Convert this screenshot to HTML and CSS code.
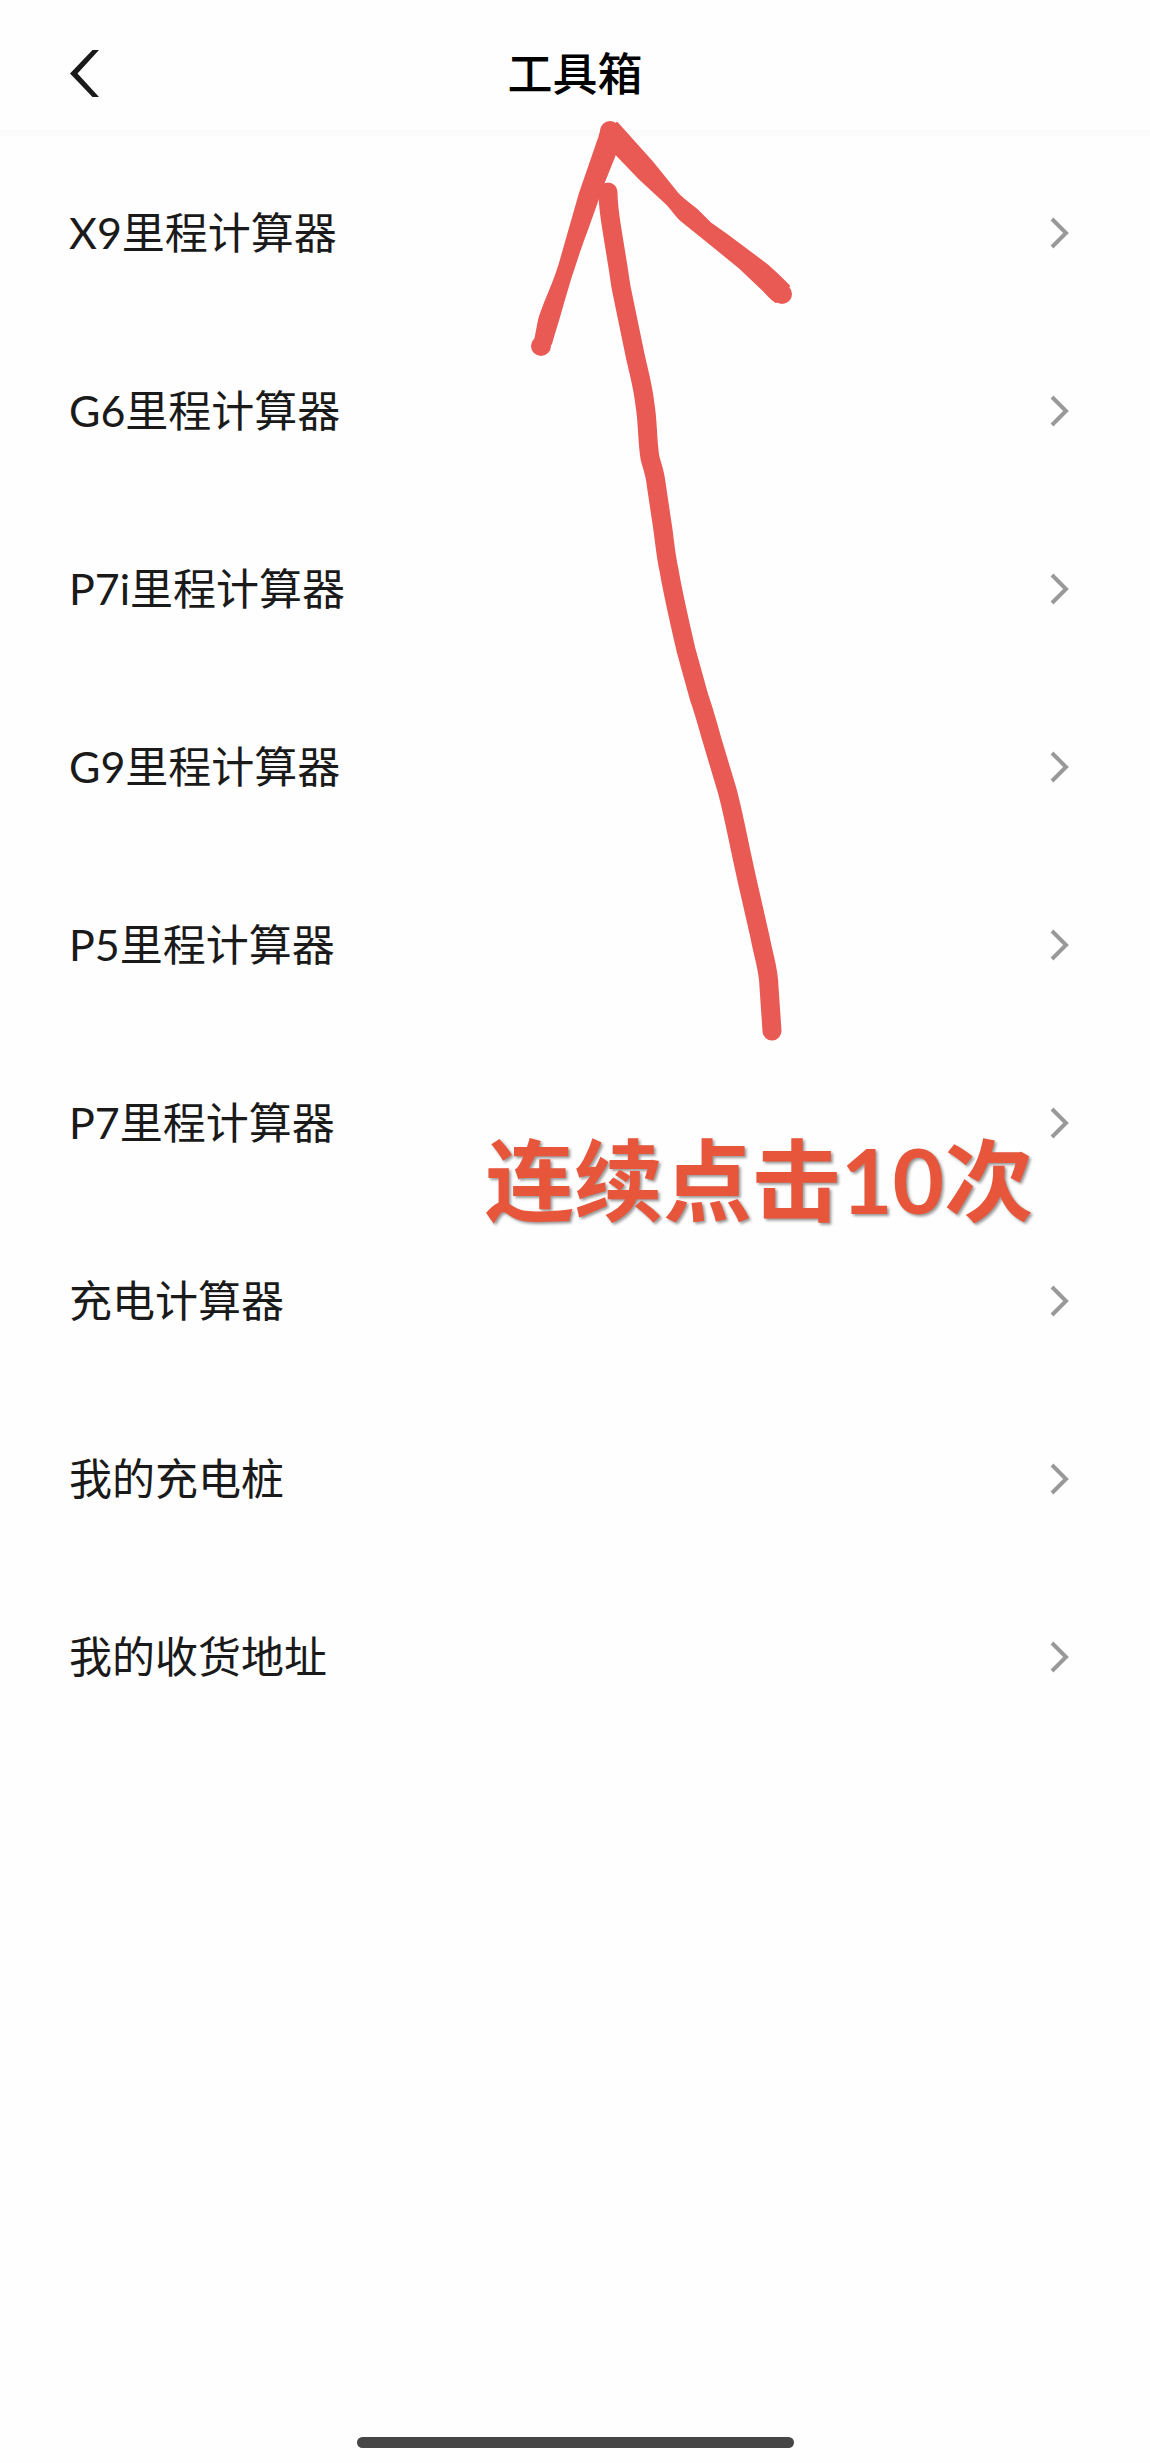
FILE: index.html
```html
<!DOCTYPE html>
<html lang="zh-CN">
  <head>
    <meta charset="UTF-8" />
    <meta name="viewport" content="width=device-width, initial-scale=1.0" />
    <title>工具箱</title>
    <link rel="stylesheet" href="styles.css">
  </head>
  <body>
    <header class="header">
      <button class="back-btn" type="button" aria-label="返回">
        <svg width="30" height="48" viewBox="0 0 30 48"><path d="M22.5 0H29L7.5 23.5 29 47H22.5L0 23.5Z" fill="#1a1a1a" /></svg>
      </button>
      <h1>工具箱</h1>
    </header>

    <nav class="tool-list">
      <a href="#" class="tool"><span>X9里程计算器</span><svg class="arrow" viewBox="0 0 20 32"><path d="M2 2L16 16 2 30" /></svg></a>
      <a href="#" class="tool"><span>G6里程计算器</span><svg class="arrow" viewBox="0 0 20 32"><path d="M2 2L16 16 2 30" /></svg></a>
      <a href="#" class="tool"><span>P7i里程计算器</span><svg class="arrow" viewBox="0 0 20 32"><path d="M2 2L16 16 2 30" /></svg></a>
      <a href="#" class="tool"><span>G9里程计算器</span><svg class="arrow" viewBox="0 0 20 32"><path d="M2 2L16 16 2 30" /></svg></a>
      <a href="#" class="tool"><span>P5里程计算器</span><svg class="arrow" viewBox="0 0 20 32"><path d="M2 2L16 16 2 30" /></svg></a>
      <a href="#" class="tool"><span>P7里程计算器</span><svg class="arrow" viewBox="0 0 20 32"><path d="M2 2L16 16 2 30" /></svg></a>
      <a href="#" class="tool"><span>充电计算器</span><svg class="arrow" viewBox="0 0 20 32"><path d="M2 2L16 16 2 30" /></svg></a>
      <a href="#" class="tool"><span>我的充电桩</span><svg class="arrow" viewBox="0 0 20 32"><path d="M2 2L16 16 2 30" /></svg></a>
      <a href="#" class="tool"><span>我的收货地址</span><svg class="arrow" viewBox="0 0 20 32"><path d="M2 2L16 16 2 30" /></svg></a>
    </nav>

    <div class="home-bar"></div>

    <!-- hand drawn arrow pointing at the title -->
    <svg class="mark-arrow" width="270" height="930" viewBox="525 115 270 930" aria-hidden="true">
      <path class="head" d="M602 128L599 138 580 193 560 263C553 287 544 302 539 320L535 341 551 344C554 333 559 318 563 303 570 278 579 251 588 227L604 182 616 152 618 128Z" />
      <path class="head" d="M617 123L652 162 677 193C683 200 690 204 697 210L710 223 727 235 767 265 778 275 789 286 776 302C770 299 766 292 760 287L740 268 713 246 682 221C677 217 672 209 667 204L640 179 615 153 603 137Z" />
      <circle cx="610" cy="131" r="10" />
      <circle cx="541" cy="346" r="10" />
      <circle cx="782" cy="294" r="10" />
      <path class="shaft" d="M608 192C608 205 610 218 612 230L618 267 621 287 634 350C638 370 643 385 645 405 648 422 647 440 650 458 652 466 655 473 656 483L663 530C665 545 666 557 669 570 673 594 680 624 686 650L699 697C704 711 708 726 712 740L727 790C733 812 737 834 742 857L747 880 760 937C763 954 769 970 769 987L772 1031" />
    </svg>
    <p class="mark-text">连续点击10次</p>
  </body>
</html>
```
FILE: styles.css
```css
* {
  margin: 0;
  padding: 0;
  box-sizing: border-box;
}

body {
  position: relative;
  display: flex;
  flex-direction: column;
  min-height: 100vh;
  padding-bottom: 15px;
  background-color: #fefefe;
  color: #1a1a1a;
  font-family: Lato, "Noto Sans CJK SC", sans-serif;
}

.header {
  display: grid;
  grid-template-columns: 1fr auto 1fr;
  align-items: center;
  height: 136px;
  padding: 18px 70px 0;
  border-bottom: 6px solid #fafafa;
}

.back-btn {
  justify-self: start;
  height: 48px;
  border: none;
  background: none;
  cursor: pointer;
}

.back-btn svg {
  display: block;
}

h1 {
  color: #000;
  font-size: 45px;
  font-weight: 500;
  line-height: 60px;
}

.tool-list {
  padding-top: 8px;
}

.tool {
  display: flex;
  justify-content: space-between;
  align-items: center;
  height: 178px;
  padding: 0 80px 0 69px;
  color: #1a1a1a;
  font-size: 43px;
  line-height: 60px;
  text-decoration: none;
}

.arrow {
  width: 20px;
  height: 32px;
  fill: none;
  stroke: #999;
  stroke-width: 4px;
}

.home-bar {
  width: 38%;
  height: 11px;
  margin: auto auto 0;
  border-radius: 6px;
  background-color: #464646;
}

.mark-arrow {
  position: absolute;
  top: 115px;
  left: 525px;
  fill: #e95a54;
  pointer-events: none;
}

.head {
  stroke: #e95a54;
  stroke-width: 2px;
  stroke-linejoin: round;
}

.shaft {
  fill: none;
  stroke: #e95a54;
  stroke-width: 19px;
  stroke-linecap: round;
  stroke-linejoin: round;
}

.mark-text {
  position: absolute;
  top: 1120px;
  left: 485px;
  color: #e7553a;
  font-size: 89px;
  font-weight: 700;
  line-height: 120px;
  white-space: nowrap;
  text-shadow: 2px 2px 3px rgba(0, 0, 0, 0.4);
  pointer-events: none;
}
```
